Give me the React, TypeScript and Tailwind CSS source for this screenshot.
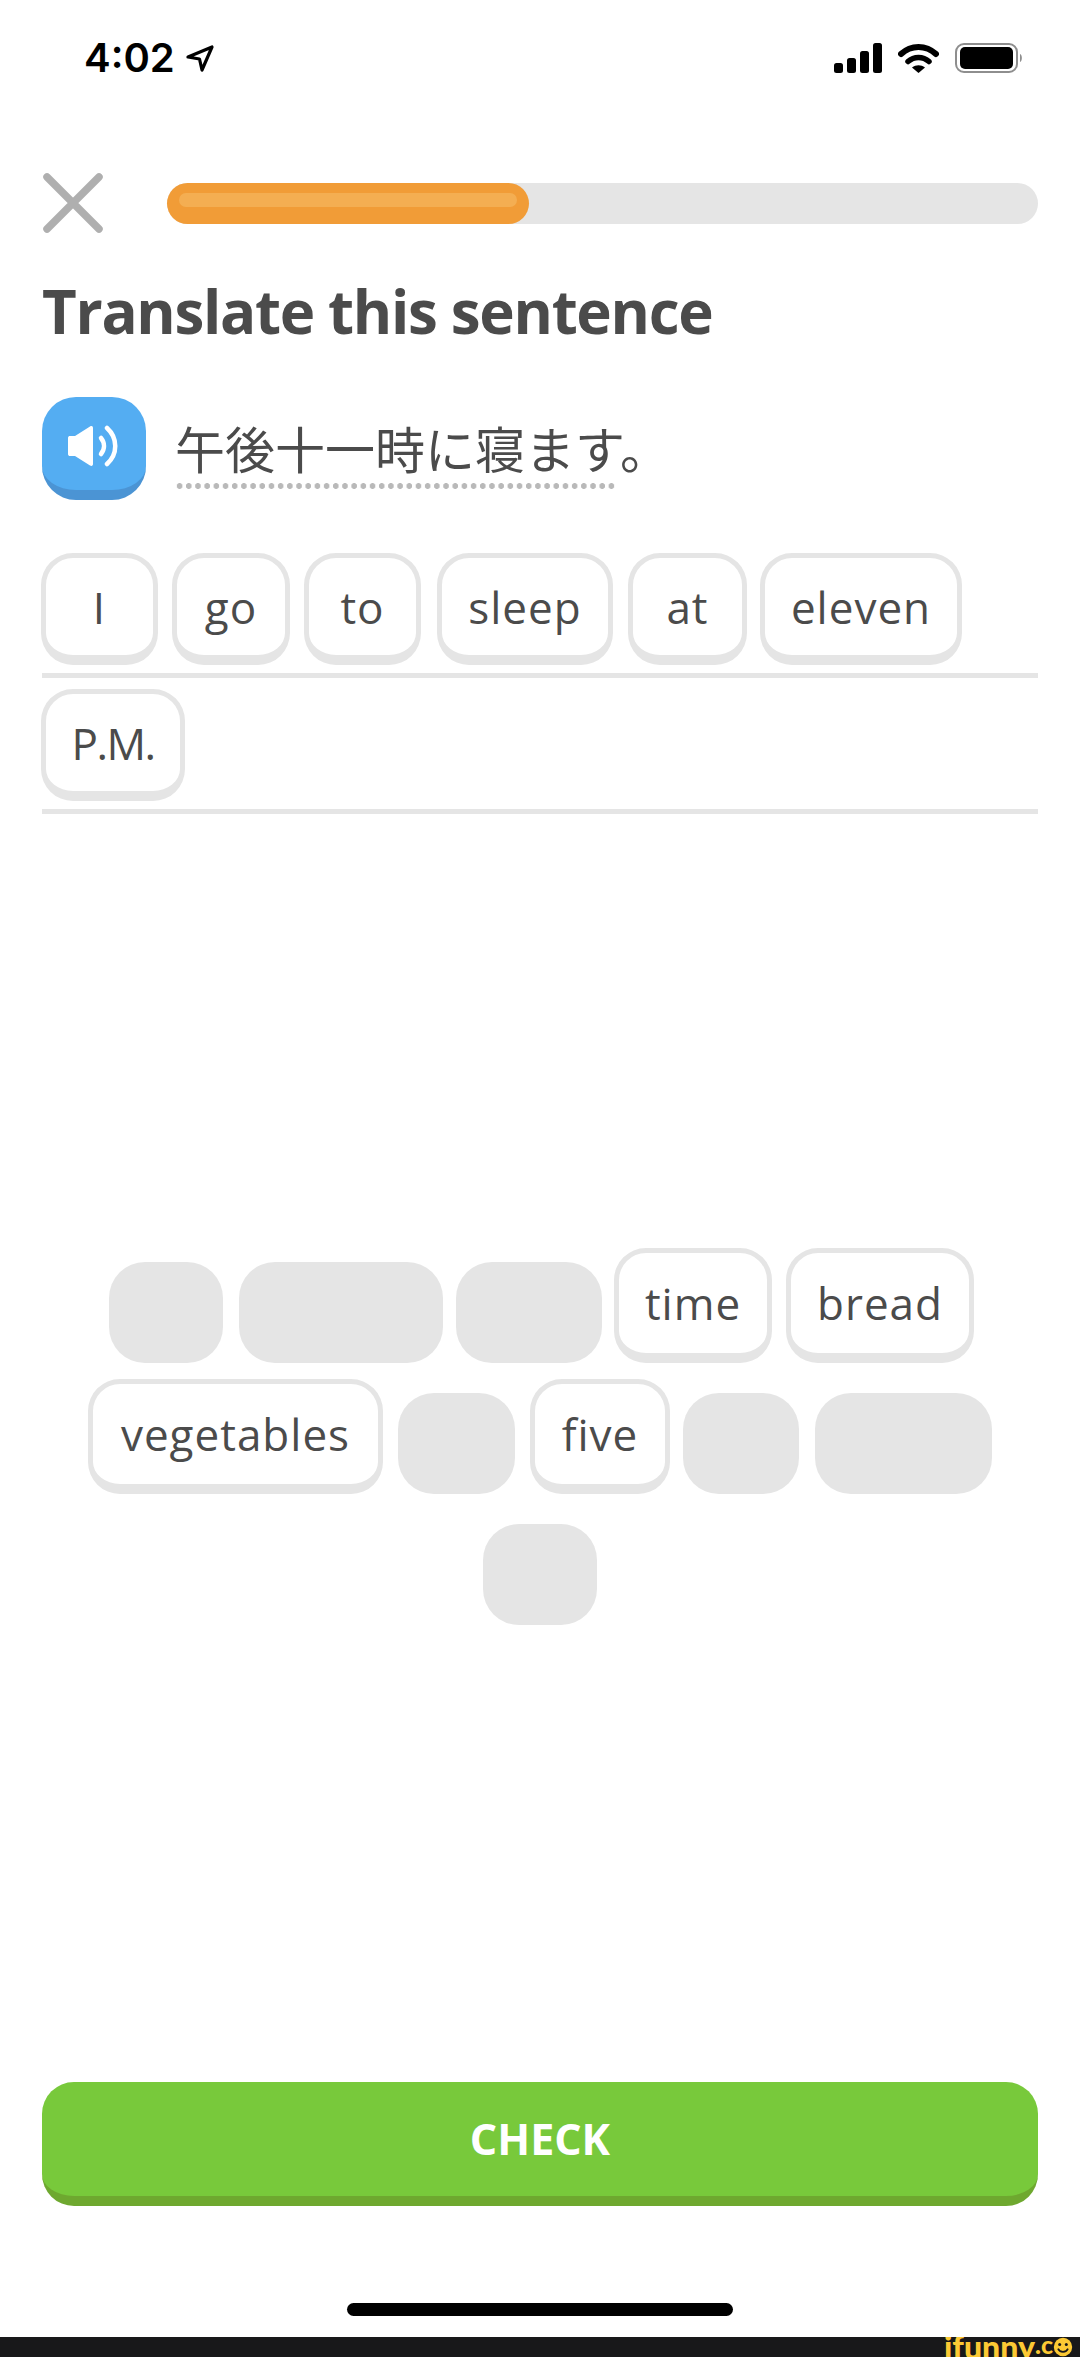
const topRows = [
  [
    { label: 'I', width: 'w-[117px]', gap: '' },
    { label: 'go', width: 'w-[118px]', gap: '' },
    { label: 'to', width: 'w-[117px]', gap: '' },
    { label: 'sleep', width: 'w-[176px]', gap: 'ml-[2px]' },
    { label: 'at', width: 'w-[119px]', gap: 'ml-px' },
    { label: 'eleven', width: 'w-[202px]', gap: '-ml-px' },
  ],
  [{ label: 'P.M.', width: 'w-[144px]', gap: 'tracking-[-1.5px]!' }],
];

const bankRows = [
  [
    { width: 'w-[114px]', gap: '' },
    { width: 'w-[204px]', gap: 'ml-[2px]' },
    { width: 'w-[146px]', gap: '-ml-px' },
    { label: 'time', width: 'w-[158px]', gap: '-ml-[2px]' },
    { label: 'bread', width: 'w-[188px]', gap: '' },
  ],
  [
    { label: 'vegetables', width: 'w-[295px]', gap: '' },
    { width: 'w-[117px]', gap: 'ml-px' },
    { label: 'five', width: 'w-[140px]', gap: 'ml-px' },
    { width: 'w-[116px]', gap: '-ml-px' },
    { width: 'w-[177px]', gap: 'ml-[2px]' },
  ],
  [{ width: 'w-[114px]', gap: '' }],
];

const Chip = ({ label, className }: { label: string; className: string }) => (
  <div
    className={`${className} flex items-center justify-center rounded-[32px] border-[5px] border-b-[10px] border-[#e5e5e5] bg-white text-[44px] tracking-[1px] text-[#4b4b4b]`}
  >
    {label}
  </div>
);

const StatusBar = () => (
  <div className="flex h-[73px] items-start justify-between pl-[84px] pr-[57px] pt-[43px]">
    <div className="flex items-center gap-[11px]">
      <span className="font-['Inter'] text-[40px] font-semibold leading-[30px] text-black">4:02</span>
      <svg width="28" height="27" viewBox="0 0 28 27" fill="none">
        <path d="M2 12 L26 2 L16 25 L13.5 14 Z" stroke="#000" strokeWidth="3.2" strokeLinejoin="round" />
      </svg>
    </div>
    <div className="flex items-center gap-[16px]">
      <svg width="48" height="30" viewBox="0 0 48 30" fill="#000">
        <rect x="0" y="20" width="9" height="10" rx="2.5" />
        <rect x="13" y="15" width="9" height="15" rx="2.5" />
        <rect x="26" y="8" width="9" height="22" rx="2.5" />
        <rect x="39" y="0" width="9" height="30" rx="2.5" />
      </svg>
      <svg width="41" height="30" viewBox="0 0 41 30" fill="none">
        <path d="M3 11 C13 1.5 28 1.5 38 11" stroke="#000" strokeWidth="6" strokeLinecap="round" />
        <path d="M10 18.5 C16 13 25 13 31 18.5" stroke="#000" strokeWidth="5.5" strokeLinecap="round" />
        <path d="M14 24.5 C18 21.5 23 21.5 27 24.5 L20.5 30 Z" fill="#000" />
      </svg>
      <svg width="68" height="30" viewBox="0 0 68 30" fill="none">
        <rect x="1" y="1" width="61" height="28" rx="8" stroke="#8e8e8e" strokeWidth="2" />
        <rect x="5" y="4" width="53" height="22" rx="5" fill="#000" />
        <path d="M65 11 C67.5 12 67.5 18 65 19 Z" fill="#8e8e8e" />
      </svg>
    </div>
  </div>
);

const App = () => {
  return (
    <div className="flex h-[2357px] w-[1080px] flex-col overflow-hidden bg-white font-['Open_Sans',sans-serif]">
      <StatusBar />

      <div className="mt-[100px] flex h-[60px] items-center gap-[64px] pl-[43px] pr-[42px]">
        <svg width="60" height="60" viewBox="0 0 60 60" fill="none" className="shrink-0">
          <path d="M4 4 L56 56 M56 4 L4 56" stroke="#afafaf" strokeWidth="7.5" strokeLinecap="round" />
        </svg>
        <div className="h-[41px] flex-1 rounded-full bg-[#e5e5e5]">
          <div className="h-full w-[362px] rounded-full bg-[#f19c37] px-[12px] pt-[10px]">
            <div className="h-[14px] rounded-full bg-[#f4ae52]" />
          </div>
        </div>
      </div>

      <h1 className="mt-[42px] pl-[42px] text-[60px] font-bold leading-[72px] tracking-[-1.3px] text-[#4b4b4b]">
        Translate this sentence
      </h1>

      <div className="mt-[50px] flex gap-[29px] pl-[42px]">
        <div className="flex h-[103px] w-[104px] items-center justify-center rounded-[34px] border-b-[10px] border-[#4b94d4] bg-[#54adf2]">
          <svg width="56" height="42" viewBox="0 0 56 42" fill="none" className="mt-[5px]">
            <path d="M2 13 C2 11.5 3 11 4 11 H9 L24 1.5 C26 0.5 27 1.5 27 3 V39 C27 40.5 26 41.5 24 40.5 L9 31 H4 C3 31 2 30.5 2 29 Z" fill="#fff" />
            <path d="M35 13 C39 18 39 24 35 29" stroke="#fff" strokeWidth="4.5" strokeLinecap="round" />
            <path d="M41 3 C52 13 52 29 41 39" stroke="#fff" strokeWidth="4.5" strokeLinecap="round" />
          </svg>
        </div>
        <div className="pt-[21px]">
          <div className="font-['Noto_Sans_CJK_JP',sans-serif] text-[50px] leading-[58px] text-[#4b4b4b]">
            午後十一時に寝ます。
          </div>
          <div className="mt-[7px] h-[6px] w-[441px] bg-[radial-gradient(circle,#b9b9b9_2.6px,transparent_3.2px)] bg-[length:9.2px_6px]" />
        </div>
      </div>

      <div className="mt-[53px] px-[42px]">
        {topRows.map((row, i) => (
          <div key={i} className={i > 0 ? 'mt-[11px]' : ''}>
            <div className="-ml-px flex gap-[14px]">
              {row.map((chip) => (
                <Chip key={chip.label} label={chip.label} className={`${chip.width} ${chip.gap} h-[112px]`} />
              ))}
            </div>
            <div className="mt-[8px] h-[5px] bg-[#e5e5e5]" />
          </div>
        ))}
      </div>

      <div className="mt-[434px] flex flex-col gap-[16px]">
        {bankRows.map((row, i) => (
          <div key={i} className={`flex h-[115px] items-end justify-center gap-[14px] ${i === 0 ? 'pl-[3px]' : ''}`}>
            {row.map((chip, j) =>
              chip.label ? (
                <Chip key={j} label={chip.label} className={`${chip.width} ${chip.gap} h-[115px]`} />
              ) : (
                <div key={j} className={`${chip.width} ${chip.gap} h-[101px] rounded-[36px] bg-[#e5e5e5]`} />
              ),
            )}
          </div>
        ))}
      </div>

      <div className="mx-[42px] mt-[457px] flex h-[124px] items-center justify-center rounded-[32px] border-b-[10px] border-[#6ea82f] bg-[#78c93b] text-[43px] font-bold text-white">
        CHECK
      </div>

      <div className="mx-auto mt-[97px] h-[13px] w-[386px] rounded-full bg-black" />

      <div className="mt-[21px] flex h-[20px] items-start justify-end overflow-hidden bg-[#18181a] pr-[7px]">
        <span className="font-['Lato',sans-serif] text-[32px] font-black leading-[20px] text-[#fcc934]">ifunny</span>
        <span className="-mt-[3px] font-['Lato',sans-serif] text-[25px] font-black leading-[20px] text-[#fcc934]">.c</span>
        <svg width="20" height="20" viewBox="0 0 24 24" className="shrink-0">
          <circle cx="12" cy="12" r="11" fill="#fcc934" />
          <circle cx="8" cy="9" r="1.8" fill="#18181a" />
          <circle cx="16" cy="9" r="1.8" fill="#18181a" />
          <path d="M6 14 C8 19 16 19 18 14" stroke="#18181a" strokeWidth="2" fill="none" />
        </svg>
      </div>
    </div>
  );
};

export default App;
